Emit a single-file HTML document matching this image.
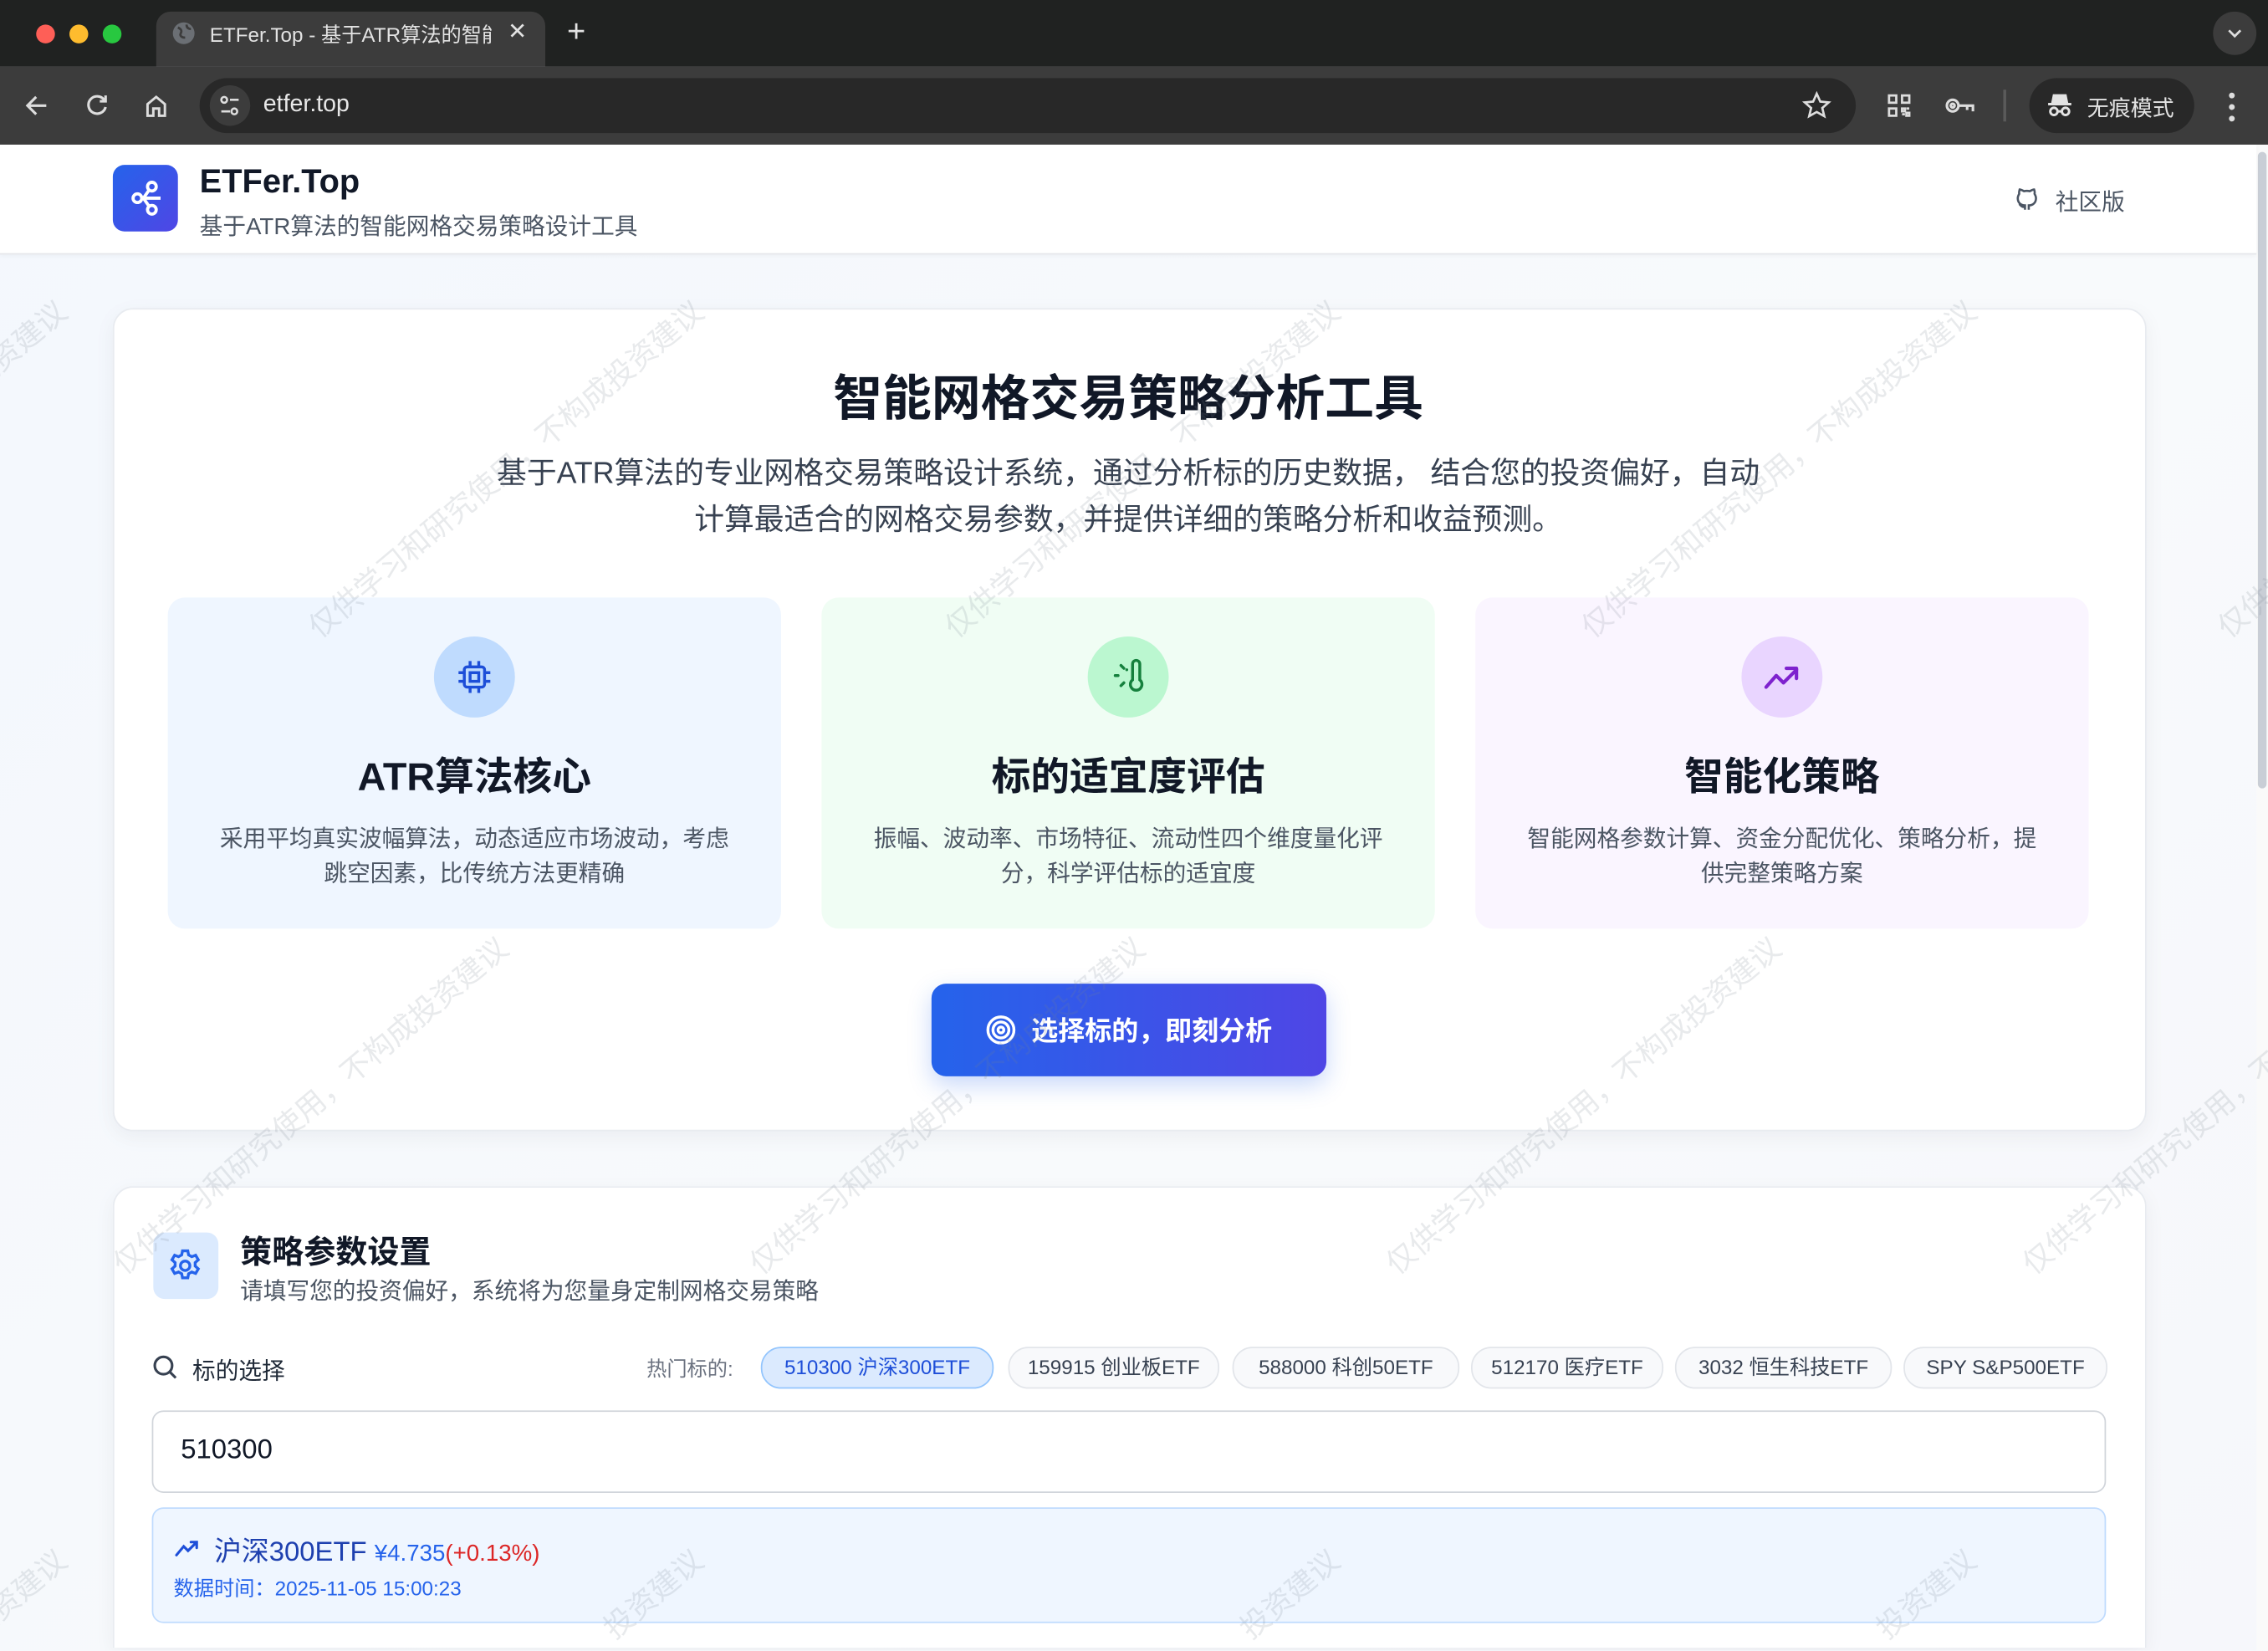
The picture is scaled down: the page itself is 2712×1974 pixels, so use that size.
<!DOCTYPE html>
<html><head><meta charset="utf-8">
<style>
html,body{margin:0;padding:0;width:2712px;height:1974px;overflow:hidden;background:#f5f8fc;}
#root{position:absolute;left:0;top:0;width:1568px;height:1141px;transform:scale(1.729592);transform-origin:0 0;overflow:hidden;font-family:"Liberation Sans","Noto Sans CJK SC",sans-serif;background:linear-gradient(135deg,#f3f7fd,#f8fafc 60%,#f6f7fb);}
.a{position:absolute;}
.tabbar{left:0;top:0;width:1568px;height:46px;background:#202221;}
.toolbar{left:0;top:46px;width:1568px;height:54px;background:#3c3c3c;}
.dot{width:13px;height:13px;border-radius:50%;top:17px;}
.tab{left:108px;top:8px;width:269px;height:38px;background:#3c3c3c;border-radius:10px 10px 0 0;}
.url{left:138px;top:54px;width:1145px;height:38px;background:#282828;border-radius:19px;}
.wt{color:#e3e3e3;}
.header{left:0;top:100px;width:1560px;height:75px;background:#fff;border-bottom:1px solid #e5e7eb;box-shadow:0 1px 3px rgba(0,0,0,.04);}
.card{background:#fff;border:1px solid #e8ebf0;border-radius:14px;box-shadow:0 4px 14px rgba(15,23,42,.05);}
.feat{top:413px;width:424px;height:229px;border-radius:12px;text-align:center;}
.feat .ic{position:absolute;left:184px;top:27px;width:56px;height:56px;border-radius:50%;display:flex;align-items:center;justify-content:center;}
.feat h3{position:absolute;left:0;right:0;top:106px;margin:0;font-size:27px;font-weight:bold;color:#111827;line-height:36px;}
.feat p{position:absolute;left:0;right:0;top:156px;margin:0;font-size:16px;line-height:23.5px;color:#4b5563;white-space:nowrap;}
.chip{top:931px;height:27px;border:1px solid #e2e5ea;background:#f8f9fb;border-radius:14px;font-size:14px;line-height:27px;color:#374151;text-align:center;}
.wm{position:absolute;white-space:nowrap;font-size:20.5px;color:rgba(120,130,140,.17);transform-origin:0 50%;transform:rotate(-40deg);pointer-events:none;}
</style></head><body><div id="root">
<div class="a tabbar"></div>
<div class="a dot" style="left:25px;background:#fe5f57"></div>
<div class="a dot" style="left:48px;background:#febc2e"></div>
<div class="a dot" style="left:71px;background:#28c840"></div>
<div class="a tab"></div>
<svg class="a" style="left:118px;top:14px" width="18" height="18" viewBox="0 0 18 18"><circle cx="9" cy="9" r="7.5" fill="#6b6f74"/><path d="M5 5c2 1 3 2 2 4s1 3 3 3M11 3c0 2 1 3 3 3" stroke="#3c3c3c" stroke-width="1.6" fill="none"/></svg>
<div class="a wt" style="left:145px;top:14px;font-size:14px;width:195px;overflow:hidden;white-space:nowrap;">ETFer.Top - 基于ATR算法的智能</div>
<div class="a wt" style="left:351px;top:12px;font-size:16px;">✕</div>
<div class="a wt" style="left:392px;top:9px;font-size:22px;">+</div>
<div class="a" style="left:1530px;top:8px;width:30px;height:30px;border-radius:15px;background:#3c3c3c;"></div>
<svg class="a" style="left:1539px;top:18px" width="12" height="10"><path d="M2 3l4 4 4-4" stroke="#ddd" stroke-width="1.6" fill="none"/></svg>
<div class="a toolbar"></div>
<svg class="a" style="left:16px;top:63px" width="20" height="20" viewBox="0 0 20 20" fill="none" stroke="#ddd" stroke-width="1.8"><path d="M16 10H4M9 4l-6 6 6 6"/></svg>
<svg class="a" style="left:57px;top:63px" width="20" height="20" viewBox="0 0 20 20" fill="none" stroke="#ddd" stroke-width="1.8"><path d="M15 6a6 6 0 1 0 1 5"/><path d="M16 3v4h-4"/></svg>
<svg class="a" style="left:98px;top:63px" width="20" height="20" viewBox="0 0 20 20" fill="none" stroke="#ddd" stroke-width="1.7"><path d="M4 9l6-5 6 5v8h-4v-5H8v5H4z"/></svg>
<div class="a url"></div>
<div class="a" style="left:145px;top:59px;width:28px;height:28px;border-radius:14px;background:#3c3c3c;"></div>
<svg class="a" style="left:150px;top:64px" width="18" height="18" viewBox="0 0 18 18" fill="none" stroke="#ddd" stroke-width="1.5"><circle cx="5" cy="5" r="2"/><path d="M9 5h6M3 13h6"/><circle cx="12" cy="13" r="2"/></svg>
<div class="a" style="left:182px;top:63px;font-size:16.5px;color:#e8e8e8;">etfer.top</div>
<svg class="a" style="left:1245px;top:62px" width="22" height="22" viewBox="0 0 24 24" fill="none" stroke="#ddd" stroke-width="1.7"><path d="M12 3l2.7 6 6.3.6-4.8 4.2 1.5 6.2L12 16.8 6.3 20l1.5-6.2L3 9.6 9.3 9z"/></svg>
<svg class="a" style="left:1303px;top:63px" width="20" height="20" viewBox="0 0 20 20" fill="none" stroke="#ddd" stroke-width="1.6"><rect x="3" y="3" width="5" height="5"/><rect x="12" y="3" width="5" height="5"/><rect x="3" y="12" width="5" height="5"/><path d="M12 12h2v2h-2zM15 15h2v2h-2zM15 12h2M12 16h2"/></svg>
<svg class="a" style="left:1343px;top:63px" width="24" height="20" viewBox="0 0 24 20" fill="none" stroke="#ddd" stroke-width="1.8"><circle cx="7" cy="10" r="4"/><circle cx="7" cy="10" r="1.3"/><path d="M11 10h10v4M17 10v3"/></svg>
<div class="a" style="left:1385px;top:62px;width:2px;height:22px;background:#5a5a5a;"></div>
<div class="a" style="left:1403px;top:54px;width:114px;height:38px;border-radius:19px;background:#282828;"></div>
<svg class="a" style="left:1414px;top:63px" width="20" height="20" viewBox="0 0 20 20" fill="none" stroke="#e3e3e3" stroke-width="1.7"><path d="M6 3h8l1 5H5z" fill="#e3e3e3"/><path d="M2 9h16"/><circle cx="6" cy="14" r="2.5"/><circle cx="14" cy="14" r="2.5"/><path d="M8.5 14h3"/></svg>
<div class="a wt" style="left:1443px;top:64px;font-size:15px;">无痕模式</div>
<div class="a" style="left:1541px;top:64px;width:4px;height:4px;border-radius:2px;background:#ddd;box-shadow:0 8px 0 #ddd,0 16px 0 #ddd;"></div>
<div class="a" style="left:1560px;top:100px;width:8px;height:1041px;background:#fafafa;"></div>
<div class="a" style="left:1561px;top:105px;width:6px;height:440px;border-radius:3px;background:#c9ced6;"></div>
<div class="a header"></div>
<div class="a" style="left:78px;top:114px;width:45px;height:46px;border-radius:8px;background:linear-gradient(135deg,#2563eb,#4f46e5);"></div>
<svg class="a" style="left:86px;top:122px" width="30" height="30" viewBox="0 0 30 30" fill="none" stroke="#fff" stroke-width="2.2"><circle cx="19" cy="7" r="3"/><circle cx="9" cy="15" r="3"/><circle cx="19" cy="23" r="3"/><path d="M12 15h13M17 9.5l-3.5 5M17 20.5l-3.5-5"/></svg>
<div class="a" style="left:138px;top:112px;font-size:23px;font-weight:bold;color:#111827;">ETFer.Top</div>
<div class="a" style="left:138px;top:143px;font-size:16px;color:#4b5563;">基于ATR算法的智能网格交易策略设计工具</div>
<svg class="a" style="left:1393px;top:128px" width="18" height="19" viewBox="0 0 18 19" fill="none" stroke="#4b5563" stroke-width="1.5"><path d="M7 17v-3c-3 0-5-2-5-5 0-1 .4-2 1-3-.2-1 0-2 .3-3 1 0 2 .6 3 1.2a8 8 0 0 1 4 0c1-.6 2-1.2 3-1.2.4 1 .5 2 .3 3 .6 1 1 2 1 3 0 3-2 5-5 5v3"/><path d="M7 15c-2 .5-3-1-4-2"/></svg>
<div class="a" style="left:1421px;top:126px;font-size:16px;color:#4b5563;">社区版</div>
<div class="a card" style="left:78px;top:213px;width:1404px;height:567px;"></div>
<div class="a" style="left:78px;top:248px;width:1404px;text-align:center;font-size:34px;font-weight:bold;color:#111827;">智能网格交易策略分析工具</div>
<div class="a" style="left:200px;top:312px;width:1160px;text-align:center;font-size:20.7px;line-height:32px;color:#374151;white-space:nowrap;">基于ATR算法的专业网格交易策略设计系统，通过分析标的历史数据， 结合您的投资偏好，自动<br>计算最适合的网格交易参数，并提供详细的策略分析和收益预测。</div>
<div class="a feat" style="left:116px;background:#eff6ff;">
 <div class="ic" style="background:#bfdbfe;"><svg width="26" height="26" viewBox="0 0 26 26" fill="none" stroke="#1d4ed8" stroke-width="2"><rect x="6" y="6" width="14" height="14" rx="2"/><rect x="10" y="10" width="6" height="6"/><path d="M10 2v4M16 2v4M10 20v4M16 20v4M2 10h4M2 16h4M20 10h4M20 16h4"/></svg></div>
 <h3>ATR算法核心</h3><p>采用平均真实波幅算法，动态适应市场波动，考虑<br>跳空因素，比传统方法更精确</p></div>
<div class="a feat" style="left:568px;background:#f0fdf4;">
 <div class="ic" style="background:#bbf7d0;"><svg width="28" height="28" viewBox="0 0 28 28" fill="none" stroke="#15803d" stroke-width="2" stroke-linecap="round"><path d="M17 16V5a2.5 2.5 0 0 1 5 0v11a4 4 0 1 1-5 0z"/><path d="M9 6l2 2M5 13h2M9 20l2-2M13 9v0"/></svg></div>
 <h3>标的适宜度评估</h3><p>振幅、波动率、市场特征、流动性四个维度量化评<br>分，科学评估标的适宜度</p></div>
<div class="a feat" style="left:1020px;background:#faf5ff;">
 <div class="ic" style="background:#e9d5ff;"><svg width="28" height="28" viewBox="0 0 28 28" fill="none" stroke="#7e22ce" stroke-width="2.4" stroke-linecap="round" stroke-linejoin="round"><path d="M3 21l7-8 5 5 9-9"/><path d="M17 8h7v7"/></svg></div>
 <h3>智能化策略</h3><p>智能网格参数计算、资金分配优化、策略分析，提<br>供完整策略方案</p></div>
<div class="a" style="left:644px;top:680px;width:273px;height:64px;border-radius:10px;background:linear-gradient(90deg,#2563eb,#4f46e5);box-shadow:0 6px 16px rgba(37,99,235,.25);"></div>
<svg class="a" style="left:681px;top:701px" width="22" height="22" viewBox="0 0 22 22" fill="none" stroke="#fff" stroke-width="2"><circle cx="11" cy="11" r="9"/><circle cx="11" cy="11" r="5.5"/><circle cx="11" cy="11" r="2"/></svg>
<div class="a" style="left:713px;top:699px;font-size:18.5px;color:#fff;font-weight:bold;">选择标的，即刻分析</div>
<div class="a card" style="left:78px;top:820px;width:1404px;height:318px;border-bottom:none;border-radius:14px 14px 0 0;"></div>
<div class="a" style="left:106px;top:852px;width:45px;height:46px;border-radius:8px;background:#dbeafe;"></div>
<svg class="a" style="left:115px;top:862px" width="26" height="26" viewBox="0 0 24 24" fill="none" stroke="#2563eb" stroke-width="1.8"><path d="M10.3 2.5h3.4l.5 2.6 2 1.1 2.5-.9 1.7 2.9-2 1.8v2.2l2 1.8-1.7 2.9-2.5-.9-2 1.1-.5 2.6h-3.4l-.5-2.6-2-1.1-2.5.9-1.7-2.9 2-1.8v-2.2l-2-1.8 1.7-2.9 2.5.9 2-1.1z"/><circle cx="12" cy="12" r="3"/></svg>
<div class="a" style="left:166px;top:848px;font-size:22px;font-weight:bold;color:#111827;">策略参数设置</div>
<div class="a" style="left:166px;top:879px;font-size:16px;color:#4b5563;">请填写您的投资偏好，系统将为您量身定制网格交易策略</div>
<svg class="a" style="left:105px;top:936px" width="18" height="18" viewBox="0 0 18 18" fill="none" stroke="#374151" stroke-width="1.8"><circle cx="8" cy="8" r="6"/><path d="M12.5 12.5l4 4"/></svg>
<div class="a" style="left:133px;top:934px;font-size:16px;color:#1f2937;">标的选择</div>
<div class="a" style="left:447px;top:936px;font-size:14px;color:#6b7280;">热门标的:</div>
<div class="a chip" style="left:526px;width:159px;background:#dbeafe;border-color:#93c5fd;color:#1d4ed8;">510300 沪深300ETF</div>
<div class="a chip" style="left:697px;width:144px;">159915 创业板ETF</div>
<div class="a chip" style="left:852px;width:155px;">588000 科创50ETF</div>
<div class="a chip" style="left:1017px;width:131px;">512170 医疗ETF</div>
<div class="a chip" style="left:1158px;width:148px;">3032 恒生科技ETF</div>
<div class="a chip" style="left:1316px;width:139px;">SPY S&amp;P500ETF</div>
<div class="a" style="left:105px;top:975px;width:1349px;height:55px;border:1px solid #d1d5db;border-radius:8px;background:#fff;"></div>
<div class="a" style="left:125px;top:992px;font-size:19px;color:#111827;">510300</div>
<div class="a" style="left:105px;top:1042px;width:1349px;height:78px;border:1px solid #bfdbfe;border-radius:8px;background:#eff6ff;"></div>
<svg class="a" style="left:120px;top:1062px" width="18" height="16" viewBox="0 0 18 16" fill="none" stroke="#1d4ed8" stroke-width="1.8" stroke-linecap="round"><path d="M2 13l5-6 3 3 6-6M12 4h4v4"/></svg>
<div class="a" style="left:148px;top:1058px;font-size:19px;color:#1e40af;">沪深300ETF <span style="font-size:16px;color:#2563eb;">¥4.735</span><span style="font-size:16px;color:#dc2626;">(+0.13%)</span></div>
<div class="a" style="left:120px;top:1088px;font-size:14px;color:#2563eb;">数据时间：2025-11-05 15:00:23</div>
<div class="wm" style="left:-225px;top:420px">仅供学习和研究使用，不构成投资建议</div>
<div class="wm" style="left:215px;top:420px">仅供学习和研究使用，不构成投资建议</div>
<div class="wm" style="left:655px;top:420px">仅供学习和研究使用，不构成投资建议</div>
<div class="wm" style="left:1095px;top:420px">仅供学习和研究使用，不构成投资建议</div>
<div class="wm" style="left:1535px;top:420px">仅供学习和研究使用，不构成投资建议</div>
<div class="wm" style="left:80px;top:860px">仅供学习和研究使用，不构成投资建议</div>
<div class="wm" style="left:520px;top:860px">仅供学习和研究使用，不构成投资建议</div>
<div class="wm" style="left:960px;top:860px">仅供学习和研究使用，不构成投资建议</div>
<div class="wm" style="left:1400px;top:860px">仅供学习和研究使用，不构成投资建议</div>
<div class="wm" style="left:-21px;top:1112px">投资建议</div>
<div class="wm" style="left:419px;top:1112px">投资建议</div>
<div class="wm" style="left:859px;top:1112px">投资建议</div>
<div class="wm" style="left:1299px;top:1112px">投资建议</div>
</div></body></html>
